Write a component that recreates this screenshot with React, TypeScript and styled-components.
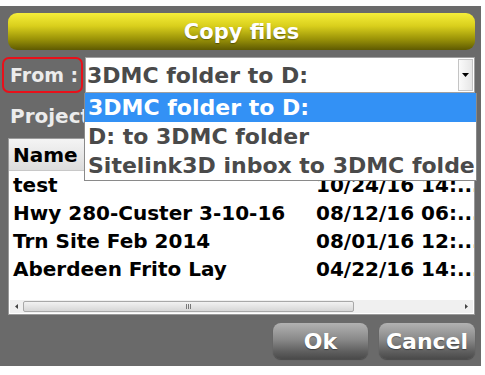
import React from "react";
import styled, { createGlobalStyle } from "styled-components";

const Global = createGlobalStyle`
  html, body { margin: 0; padding: 0; background: #ffffff; }
  body { font-family: "DejaVu Sans", "Liberation Sans", sans-serif; }
`;

const Dialog = styled.div`
  margin-top: 6px;
  width: 481px;
  height: 360px;
  box-sizing: border-box;
  background: #6a6a6a;
  padding: 7px 6px 0 8px;
  display: flex;
  flex-direction: column;
`;

const TitleBar = styled.div`
  height: 37px;
  border-radius: 9px;
  background: linear-gradient(to bottom, #f6ee3a 0%, #d9cf1c 35%, #9b9408 70%, #5e5a02 100%);
  display: flex;
  align-items: center;
  justify-content: center;
  color: #ffffff;
  font-weight: bold;
  font-size: 21px;
  text-shadow: 0 1px 1px rgba(0, 0, 0, 0.35);
`;

const FromRow = styled.div`
  margin: 7px 0 0 -6px;
  height: 36px;
  display: flex;
  position: relative;
  z-index: 2;
`;

const FromLabel = styled.div`
  width: 81px;
  box-sizing: border-box;
  border: 2px solid #e8101a;
  border-radius: 7px;
  color: #ececec;
  font-size: 19px;
  font-weight: bold;
  display: flex;
  align-items: center;
  padding-left: 6px;
  white-space: nowrap;
`;

const SelectWrap = styled.div`
  flex: 1;
  margin-left: 2px;
  position: relative;
`;

const SelectBox = styled.div`
  height: 36px;
  box-sizing: border-box;
  background: #ffffff;
  border: 1px solid #a0a0a0;
  display: flex;
  align-items: center;
`;

const SelectText = styled.div`
  flex: 1;
  padding-left: 1px;
  color: #4a4a4a;
  font-size: 22px;
  font-weight: bold;
  white-space: nowrap;
  overflow: hidden;
`;

const ArrowBtn = styled.div`
  width: 13px;
  align-self: stretch;
  margin: 1px;
  border: 1px solid #c4c4c4;
  background: linear-gradient(to right, #fafafa, #e6e6e6);
  display: flex;
  align-items: center;
  justify-content: center;
`;

const DropList = styled.div`
  position: absolute;
  top: 100%;
  left: -1px;
  right: -2px;
  background: #ffffff;
  border: 1px solid #8a8a8a;
  border-top: none;
`;

const DropItem = styled.div<{ $active?: boolean }>`
  height: 29px;
  display: flex;
  align-items: center;
  padding-left: 3px;
  font-size: 22px;
  font-weight: bold;
  white-space: nowrap;
  overflow: hidden;
  color: ${(p) => (p.$active ? "#ffffff" : "#4a4a4a")};
  background: ${(p) => (p.$active ? "#3391f5" : "#ffffff")};
`;

const ProjectLabel = styled.div`
  height: 45px;
  display: flex;
  align-items: center;
  padding-left: 2px;
  color: #ececec;
  font-size: 20px;
  font-weight: bold;
  white-space: nowrap;
`;

const Table = styled.div`
  height: 177px;
  box-sizing: border-box;
  background: #ffffff;
  border: 1px solid #9a9a9a;
  display: flex;
  flex-direction: column;
`;

const HeaderRow = styled.div`
  height: 31px;
  display: grid;
  grid-template-columns: 303px 1fr;
  background: linear-gradient(to bottom, #f4f4f4, #dcdcdc);
  border-bottom: 1px solid #c8c8c8;
`;

const HeaderCell = styled.div`
  display: flex;
  align-items: center;
  padding-left: 4px;
  font-size: 20px;
  font-weight: bold;
  color: #000;
  border-right: 1px solid #c8c8c8;
`;

const Body = styled.div`
  flex: 1;
  overflow: hidden;
`;

const Row = styled.div`
  height: 28px;
  display: grid;
  grid-template-columns: 303px 1fr;
  align-items: center;
  font-size: 20px;
  font-weight: bold;
  color: #000;
  white-space: nowrap;
`;

const Cell = styled.div`
  padding-left: 4px;
  overflow: hidden;
`;

const HScroll = styled.div`
  height: 13px;
  margin: 0 1px 1px 1px;
  background: #f0f0f0;
  display: flex;
  align-items: stretch;
`;

const ScrollArrow = styled.div`
  width: 13px;
  display: flex;
  align-items: center;
  justify-content: center;
`;

const Track = styled.div`
  flex: 1;
  display: flex;
  padding: 1px 0;
`;

const Thumb = styled.div`
  width: 329px;
  border: 1px solid #a8a8a8;
  border-radius: 2px;
  background: linear-gradient(to bottom, #f2f2f2, #d6d6d6);
  display: flex;
  align-items: center;
  justify-content: center;
`;

const Buttons = styled.div`
  margin-top: 8px;
  display: flex;
  justify-content: flex-end;
  gap: 11px;
`;

const Btn = styled.div<{ $w: number }>`
  width: ${(p) => p.$w}px;
  height: 36px;
  border-radius: 8px;
  background: linear-gradient(to bottom, #b2b2b2 0%, #8a8a8a 45%, #5e5e5e 80%, #4a4a4a 100%);
  box-shadow: 0 1px 1px rgba(0, 0, 0, 0.3);
  color: #ffffff;
  font-size: 22px;
  font-weight: bold;
  display: flex;
  align-items: center;
  justify-content: center;
  text-shadow: 0 1px 1px rgba(0, 0, 0, 0.4);
`;

const rows = [
  ["test", "10/24/16 14:..."],
  ["Hwy 280-Custer 3-10-16", "08/12/16 06:..."],
  ["Trn Site Feb 2014", "08/01/16 12:..."],
  ["Aberdeen Frito Lay", "04/22/16 14:..."],
];

export default function App() {
  return (
    <>
      <Global />
      <Dialog>
        <TitleBar>Copy files</TitleBar>
        <FromRow>
          <FromLabel>From :</FromLabel>
          <SelectWrap>
            <SelectBox>
              <SelectText>3DMC folder to D:</SelectText>
              <ArrowBtn>
                <svg width="7" height="4" viewBox="0 0 7 4">
                  <path d="M0 0 L7 0 L3.5 4 Z" fill="#000" />
                </svg>
              </ArrowBtn>
            </SelectBox>
            <DropList>
              <DropItem $active>3DMC folder to D:</DropItem>
              <DropItem>D: to 3DMC folder</DropItem>
              <DropItem>Sitelink3D inbox to 3DMC folder</DropItem>
            </DropList>
          </SelectWrap>
        </FromRow>
        <ProjectLabel>Projects :</ProjectLabel>
        <Table>
          <HeaderRow>
            <HeaderCell>Name</HeaderCell>
            <HeaderCell>Date</HeaderCell>
          </HeaderRow>
          <Body>
            {rows.map(([n, d]) => (
              <Row key={n}>
                <Cell>{n}</Cell>
                <Cell>{d}</Cell>
              </Row>
            ))}
          </Body>
          <HScroll>
            <ScrollArrow>
              <svg width="3" height="5" viewBox="0 0 3 5">
                <path d="M3 0 L0 2.5 L3 5 Z" fill="#444" />
              </svg>
            </ScrollArrow>
            <Track>
              <Thumb>
                <svg width="6" height="5" viewBox="0 0 6 5">
                  <path d="M0.5 0 V5 M2.5 0 V5 M4.5 0 V5" stroke="#777" strokeWidth="1" />
                </svg>
              </Thumb>
            </Track>
            <ScrollArrow>
              <svg width="3" height="5" viewBox="0 0 3 5">
                <path d="M0 0 L3 2.5 L0 5 Z" fill="#444" />
              </svg>
            </ScrollArrow>
          </HScroll>
        </Table>
        <Buttons>
          <Btn $w={95}>Ok</Btn>
          <Btn $w={96}>Cancel</Btn>
        </Buttons>
      </Dialog>
    </>
  );
}
